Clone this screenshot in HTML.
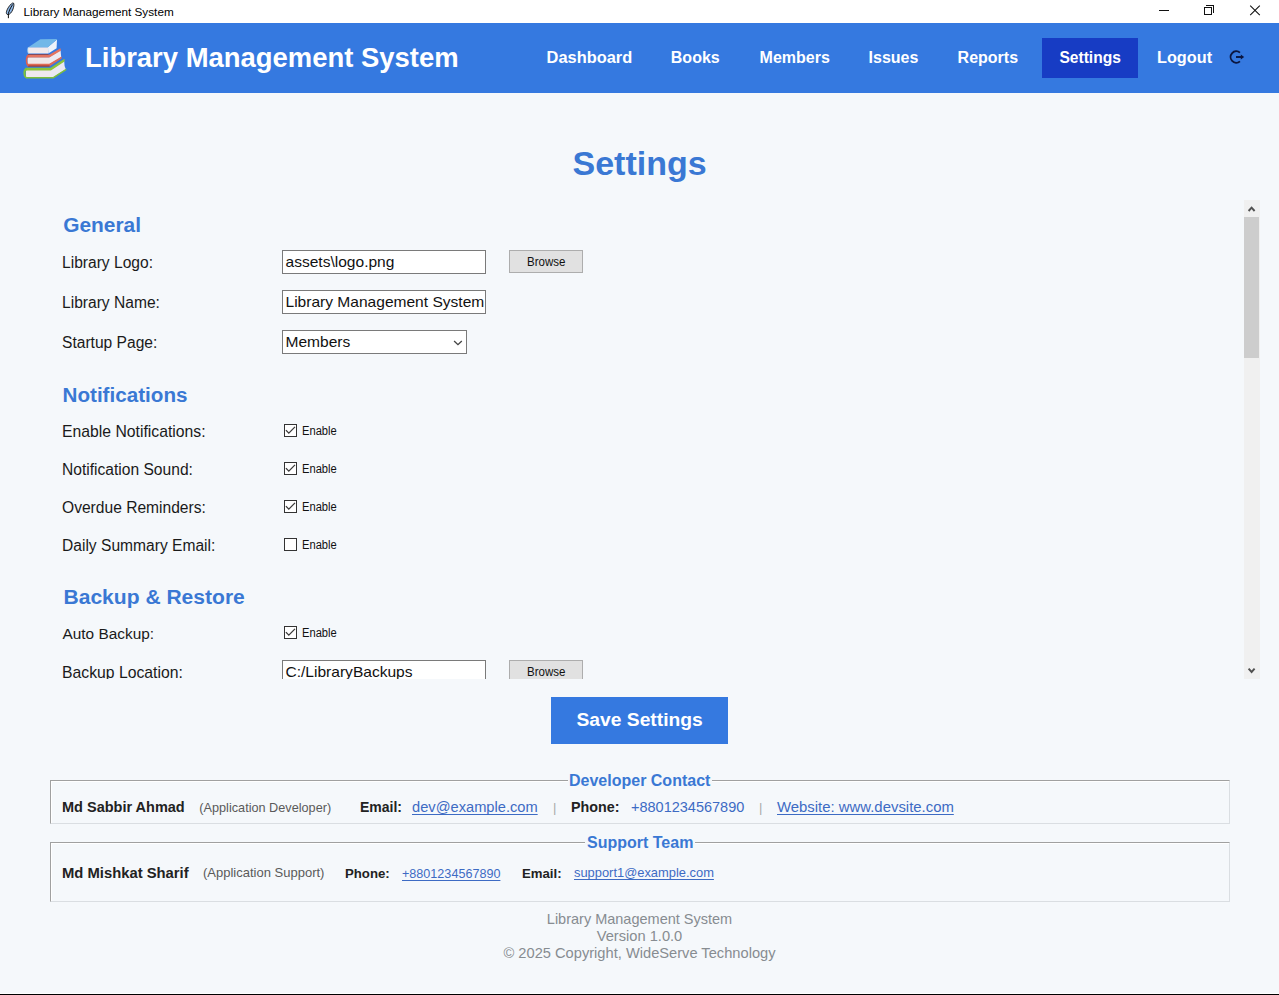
<!DOCTYPE html>
<html><head><meta charset="utf-8">
<style>
*{margin:0;padding:0;box-sizing:border-box}
html,body{width:1279px;height:995px;overflow:hidden;background:#f5f8fb;font-family:"Liberation Sans",sans-serif}
.a{position:absolute;white-space:pre}
.t{position:absolute;white-space:pre;line-height:1}
#titlebar{position:absolute;left:0;top:0;width:1279px;height:23px;background:#fff}
#header{position:absolute;left:0;top:23px;width:1279px;height:70px;background:#3579e0}
.nav{position:absolute;color:#fff;font-weight:bold;font-size:16px;line-height:1;white-space:pre}
.lbl{position:absolute;color:#1a1a1a;font-size:15.6px;line-height:1;white-space:pre}
.sec{position:absolute;color:#3a78d4;font-weight:bold;font-size:20.4px;line-height:1;white-space:pre}
.entry{position:absolute;background:#fff;border:1px solid #7a7a7a;height:24px;overflow:hidden}
.entry span{position:absolute;left:2.5px;color:#111;font-size:15.55px;line-height:1;white-space:pre}
.btn{position:absolute;background:#e1e1e1;border:1px solid #adadad;height:23px;color:#111}
.btn span{position:absolute;left:17px;top:5.2px;font-size:12px;line-height:1;white-space:pre;transform:scaleX(0.96);transform-origin:0 0}
.cb{position:absolute;width:13px;height:13px;border:1px solid #333;background:#fff}
.en{position:absolute;font-size:12px;color:#111;line-height:1;white-space:pre;transform:scaleX(0.93);transform-origin:0 0}
</style></head><body>
<div id="titlebar">
  <svg class="a" style="left:0;top:0" width="20" height="22" viewBox="0 0 20 22">
    <path d="M13.4 3 C14.3 3.6 14 7 12.6 10 C11.5 12.5 9.8 14.4 8.2 14.6 C6.5 14.8 6 13 6.6 11.2 C7.4 8.5 9.5 5.5 11.2 4 C12 3.3 12.9 2.7 13.4 3 Z" fill="#8db8ea" stroke="#111" stroke-width="0.9"/>
    <path d="M12.6 4.5 L10 9 L8.4 13.2 L8.4 18.2" fill="none" stroke="#111" stroke-width="1"/>
  </svg>
  <span class="t" style="left:23.5px;top:5.8px;font-size:11.75px;color:#000">Library Management System</span>
  <div class="a" style="left:1159px;top:10px;width:10px;height:1px;background:#111"></div>
  <div class="a" style="left:1206px;top:5px;width:8px;height:8px;border-top:1px solid #111;border-right:1px solid #111"></div>
  <div class="a" style="left:1204px;top:7px;width:8px;height:8px;border:1px solid #111;background:#fff"></div>
  <svg class="a" style="left:1249px;top:5px" width="12" height="11" viewBox="0 0 12 11"><path d="M1.2 0.6 L10.8 10.2 M10.8 0.6 L1.2 10.2" stroke="#111" stroke-width="1.05"/></svg>
</div>
<div id="header">
  <svg class="a" style="left:0;top:-23px" width="80" height="90" viewBox="0 0 80 90">
    <!-- green bottom book -->
    <path d="M26 70 L50.7 70 L63.9 61.3 L64 69 L53 77.5 L26 77.5 Z" fill="#efe9ee"/>
    <path d="M50.7 70.2 L64.2 61.2 L64.6 66 L65.8 69.2 L53 77.3 L50.7 77.3 Z" fill="#e9e8f2"/>
    <path d="M25.5 67.7 L50.6 67.7 L64.5 58.8 L64.5 61.5 L50.9 70.4 L25.5 70.4 Z" fill="#8cc43a"/>
    <path d="M26 76.9 L53 76.9 L66.3 68.6 L66.3 70.3 L53.4 78.4 L26 78.4 Z" fill="#7dbf3c"/>
    <path d="M26.8 67.7 C24.6 67.7 23.4 70 23.4 73 C23.4 76 24.6 78.4 26.8 78.4 L26.8 77 C26 77 25.6 75.2 25.6 73 C25.6 70.8 26 70.2 26.8 70.2 Z" fill="#7fc23a"/>
    <!-- red middle book -->
    <path d="M27.5 57.2 L49.3 57.2 L60 50.8 L60 57.2 L49.3 63.9 L27.5 63.9 Z" fill="#f1e8e8"/>
    <path d="M49.3 57.3 L60.6 50.5 L61.2 57.2 L49.3 64.2 Z" fill="#eceaf2"/>
    <path d="M27.5 54.7 L49.2 54.7 L60.5 48.3 L60.8 50.7 L49.4 57.4 L27.5 57.4 Z" fill="#e4735f"/>
    <path d="M27.5 63.7 L49.3 63.7 L61.6 56.6 L61.6 58.6 L49.6 66.3 L27.5 66.3 Z" fill="#df6a55"/>
    <path d="M28 65.5 L49.6 65.5 L49.6 66.6 L28 66.6 Z" fill="#9a3a2a"/>
    <path d="M28.5 54.7 C26.6 54.7 25.8 57.5 25.8 60.5 C25.8 63.5 26.6 66.3 28.5 66.3 L28.5 64.2 C27.8 64.2 27.3 62.5 27.3 60.5 C27.3 58.5 27.8 57.2 28.5 57.2 Z" fill="#e2604c"/>
    <path d="M28 54 L48.5 54 L48.5 54.9 L28 54.9 Z" fill="#8c3a3a" opacity="0.8"/>
    <!-- blue top book -->
    <path d="M28.6 47.2 L48.2 47.2 L48.2 53.6 L29.2 53.6 C28.3 53.6 27.8 52.2 27.8 50.4 C27.8 48.6 28.1 47.2 28.6 47.2 Z" fill="#f2eaec"/>
    <path d="M48 47.1 L57 39.6 L56.6 48.2 L48.3 53.6 Z" fill="#eef3fa"/>
    <path d="M28.3 47.3 L40.3 39.2 L57.3 39.1 L47.9 47.3 Z" fill="#72b8e8"/>
    <path d="M28.3 47.3 C27.6 48.3 27.5 52.5 28.6 53.6" fill="none" stroke="#a8dcf6" stroke-width="0.8"/>
  </svg>
  <span class="t" style="left:85px;top:21px;font-size:27.45px;font-weight:bold;color:#fff">Library Management System</span>
  <div class="a" style="left:1042px;top:15px;width:96px;height:40px;background:#173cc4"></div>
  <span class="nav" style="left:546.6px;top:26.1px;font-size:16.4px">Dashboard</span>
  <span class="nav" style="left:670.8px;top:26.5px">Books</span>
  <span class="nav" style="left:759.6px;top:26.5px">Members</span>
  <span class="nav" style="left:868.6px;top:26.5px">Issues</span>
  <span class="nav" style="left:957.6px;top:26.5px">Reports</span>
  <span class="nav" style="left:1059.4px;top:26.8px;font-size:15.6px">Settings</span>
  <span class="nav" style="left:1157px;top:26.3px;font-size:16.25px">Logout</span>
  <svg class="a" style="left:1229px;top:26px" width="20" height="16" viewBox="0 0 20 16">
    <path d="M10.96 3.63 A5.7 5.7 0 1 0 10.96 12.37" fill="none" stroke="#0b1640" stroke-width="1.9"/>
    <path d="M7 8 L12.5 8" stroke="#0b1640" stroke-width="1.9"/>
    <path d="M11.8 5.6 L15.2 8 L11.8 10.4 Z" fill="#0b1640"/>
  </svg>
</div>

<span class="t" style="left:572.5px;top:146px;font-size:34px;font-weight:bold;color:#3a78d4">Settings</span>

<!-- scroll area -->
<div class="a" style="left:0;top:200px;width:1279px;height:479px;overflow:hidden">
  <div class="a" style="left:0;top:-200px;width:1279px;height:995px">
    <span class="sec" style="left:63.2px;top:215.3px;font-size:20.9px">General</span>
    <span class="lbl" style="left:62px;top:255px">Library Logo:</span>
    <div class="entry" style="left:282px;top:250px;width:204px"><span style="top:3.2px">assets\logo.png</span></div>
    <div class="btn" style="left:509px;top:250px;width:74px"><span>Browse</span></div>
    <span class="lbl" style="left:62px;top:294.7px">Library Name:</span>
    <div class="entry" style="left:282px;top:290px;width:204px"><span style="top:3.2px">Library Management System</span></div>
    <span class="lbl" style="left:62px;top:334.5px">Startup Page:</span>
    <div class="entry" style="left:282px;top:330px;width:185px"><span style="top:3.2px">Members</span>
      <svg class="a" style="left:170px;top:9px" width="10" height="7" viewBox="0 0 10 7"><path d="M1.1 1.1 L4.95 4.7 L8.8 1.1" fill="none" stroke="#444" stroke-width="1.35"/></svg>
    </div>

    <span class="sec" style="left:62.5px;top:384.5px;font-size:20.65px">Notifications</span>
    <span class="lbl" style="left:62px;top:423.7px;font-size:15.75px">Enable Notifications:</span>
    <span class="lbl" style="left:62px;top:461.8px">Notification Sound:</span>
    <span class="lbl" style="left:62px;top:499.8px">Overdue Reminders:</span>
    <span class="lbl" style="left:62px;top:537.8px">Daily Summary Email:</span>
    <div class="cb" style="left:284px;top:424px"><svg class="a" style="left:0;top:0" width="11" height="11" viewBox="0 0 11 11"><path d="M0.9 5.1 L3.8 8.1 L10 1.9" fill="none" stroke="#3a3a3a" stroke-width="1.3"/></svg></div>
    <span class="en" style="left:302px;top:425px">Enable</span>
    <div class="cb" style="left:284px;top:462px"><svg class="a" style="left:0;top:0" width="11" height="11" viewBox="0 0 11 11"><path d="M0.9 5.1 L3.8 8.1 L10 1.9" fill="none" stroke="#3a3a3a" stroke-width="1.3"/></svg></div>
    <span class="en" style="left:302px;top:463px">Enable</span>
    <div class="cb" style="left:284px;top:500px"><svg class="a" style="left:0;top:0" width="11" height="11" viewBox="0 0 11 11"><path d="M0.9 5.1 L3.8 8.1 L10 1.9" fill="none" stroke="#3a3a3a" stroke-width="1.3"/></svg></div>
    <span class="en" style="left:302px;top:501px">Enable</span>
    <div class="cb" style="left:284px;top:538px"></div>
    <span class="en" style="left:302px;top:539px">Enable</span>

    <span class="sec" style="left:63.5px;top:586px;font-size:21.05px">Backup &amp; Restore</span>
    <span class="lbl" style="left:62.5px;top:626.2px;font-size:15.4px">Auto Backup:</span>
    <div class="cb" style="left:284px;top:626px"><svg class="a" style="left:0;top:0" width="11" height="11" viewBox="0 0 11 11"><path d="M0.9 5.1 L3.8 8.1 L10 1.9" fill="none" stroke="#3a3a3a" stroke-width="1.3"/></svg></div>
    <span class="en" style="left:302px;top:627px">Enable</span>
    <span class="lbl" style="left:62px;top:664.5px;font-size:15.75px">Backup Location:</span>
    <div class="entry" style="left:282px;top:660px;width:204px"><span style="top:3.2px">C:/LibraryBackups</span></div>
    <div class="btn" style="left:509px;top:660px;width:74px"><span>Browse</span></div>
  </div>
</div>

<!-- scrollbar -->
<div class="a" style="left:1244px;top:200px;width:16px;height:479px;background:#f0f0f0"></div>
<div class="a" style="left:1244px;top:217px;width:15px;height:141px;background:#cdcdcd"></div>
<svg class="a" style="left:1247px;top:205px" width="10" height="8" viewBox="0 0 10 8"><path d="M1.6 6 L4.6 2.6 L7.6 6" fill="none" stroke="#505050" stroke-width="1.9"/></svg>
<svg class="a" style="left:1247px;top:666px" width="10" height="8" viewBox="0 0 10 8"><path d="M1.6 2.6 L4.6 6 L7.6 2.6" fill="none" stroke="#505050" stroke-width="1.9"/></svg>

<!-- save button -->
<div class="a" style="left:551px;top:697px;width:177px;height:47px;background:#3579e0"></div>
<span class="t" style="left:576.5px;top:709.6px;font-size:19.25px;font-weight:bold;color:#fff">Save Settings</span>

<!-- developer contact frame -->
<div class="a" style="left:50px;top:780px;width:1180px;height:44px;border-top:1px solid #a0a0a0;border-left:1px solid #a0a0a0;border-right:1px solid #dadee2;border-bottom:1px solid #dadee2;box-shadow:inset 1px 1px 0 #fff"></div>
<div class="a" style="left:568px;top:775px;width:144px;height:10px;background:#f5f8fb"></div>
<span class="t" style="left:569px;top:773px;font-size:16px;font-weight:bold;color:#3a78d4">Developer Contact</span>
<span class="t" style="left:62px;top:799.5px;font-size:14.5px;font-weight:bold;color:#222">Md Sabbir Ahmad</span>
<span class="t" style="left:199.3px;top:801.8px;font-size:12.7px;color:#5a5a5a">(Application Developer)</span>
<span class="t" style="left:360px;top:800px;font-size:14px;font-weight:bold;color:#222">Email:</span>
<span class="t" style="left:412px;top:799.5px;font-size:14.67px;color:#3d6bc4;text-decoration:underline;text-decoration-thickness:1px;text-underline-offset:1.5px;text-decoration-skip-ink:none">dev@example.com</span>
<span class="t" style="left:553px;top:801px;font-size:13px;color:#aaa">|</span>
<span class="t" style="left:571px;top:800px;font-size:14.3px;font-weight:bold;color:#222">Phone:</span>
<span class="t" style="left:631px;top:799.5px;font-size:14.5px;color:#3d6bc4">+8801234567890</span>
<span class="t" style="left:759px;top:801px;font-size:13px;color:#aaa">|</span>
<span class="t" style="left:777px;top:799.5px;font-size:14.9px;color:#3d6bc4;text-decoration:underline;text-decoration-thickness:1px;text-underline-offset:1.5px;text-decoration-skip-ink:none">Website: www.devsite.com</span>

<!-- support frame -->
<div class="a" style="left:50px;top:842px;width:1180px;height:60px;border-top:1px solid #a0a0a0;border-left:1px solid #a0a0a0;border-right:1px solid #dadee2;border-bottom:1px solid #dadee2;box-shadow:inset 1px 1px 0 #fff"></div>
<div class="a" style="left:584.5px;top:837px;width:110.5px;height:10px;background:#f5f8fb"></div>
<span class="t" style="left:587px;top:835px;font-size:16px;font-weight:bold;color:#3a78d4">Support Team</span>
<span class="t" style="left:62px;top:866px;font-size:14.8px;font-weight:bold;color:#222">Md Mishkat Sharif</span>
<span class="t" style="left:203px;top:866px;font-size:13px;color:#5a5a5a">(Application Support)</span>
<span class="t" style="left:345px;top:867px;font-size:13.2px;font-weight:bold;color:#222">Phone:</span>
<span class="t" style="left:402px;top:867.5px;font-size:12.6px;color:#3d6bc4;text-decoration:underline;text-decoration-thickness:1px;text-underline-offset:1.5px;text-decoration-skip-ink:none">+8801234567890</span>
<span class="t" style="left:522px;top:867px;font-size:13.2px;font-weight:bold;color:#222">Email:</span>
<span class="t" style="left:574px;top:866.5px;font-size:12.9px;color:#3d6bc4;text-decoration:underline;text-decoration-thickness:1px;text-underline-offset:1.5px;text-decoration-skip-ink:none">support1@example.com</span>

<!-- footer -->
<div class="a" style="left:0;top:910.8px;width:1279px;text-align:center;font-size:14.67px;line-height:17px;color:#878c91"><span style="font-size:14.5px">Library Management System</span><br>Version 1.0.0<br>© 2025 Copyright, WideServe Technology</div>

<div class="a" style="left:0;top:993px;width:1279px;height:1px;background:#fff"></div>
<div class="a" style="left:0;top:994px;width:1279px;height:1px;background:#000"></div>
</body></html>
